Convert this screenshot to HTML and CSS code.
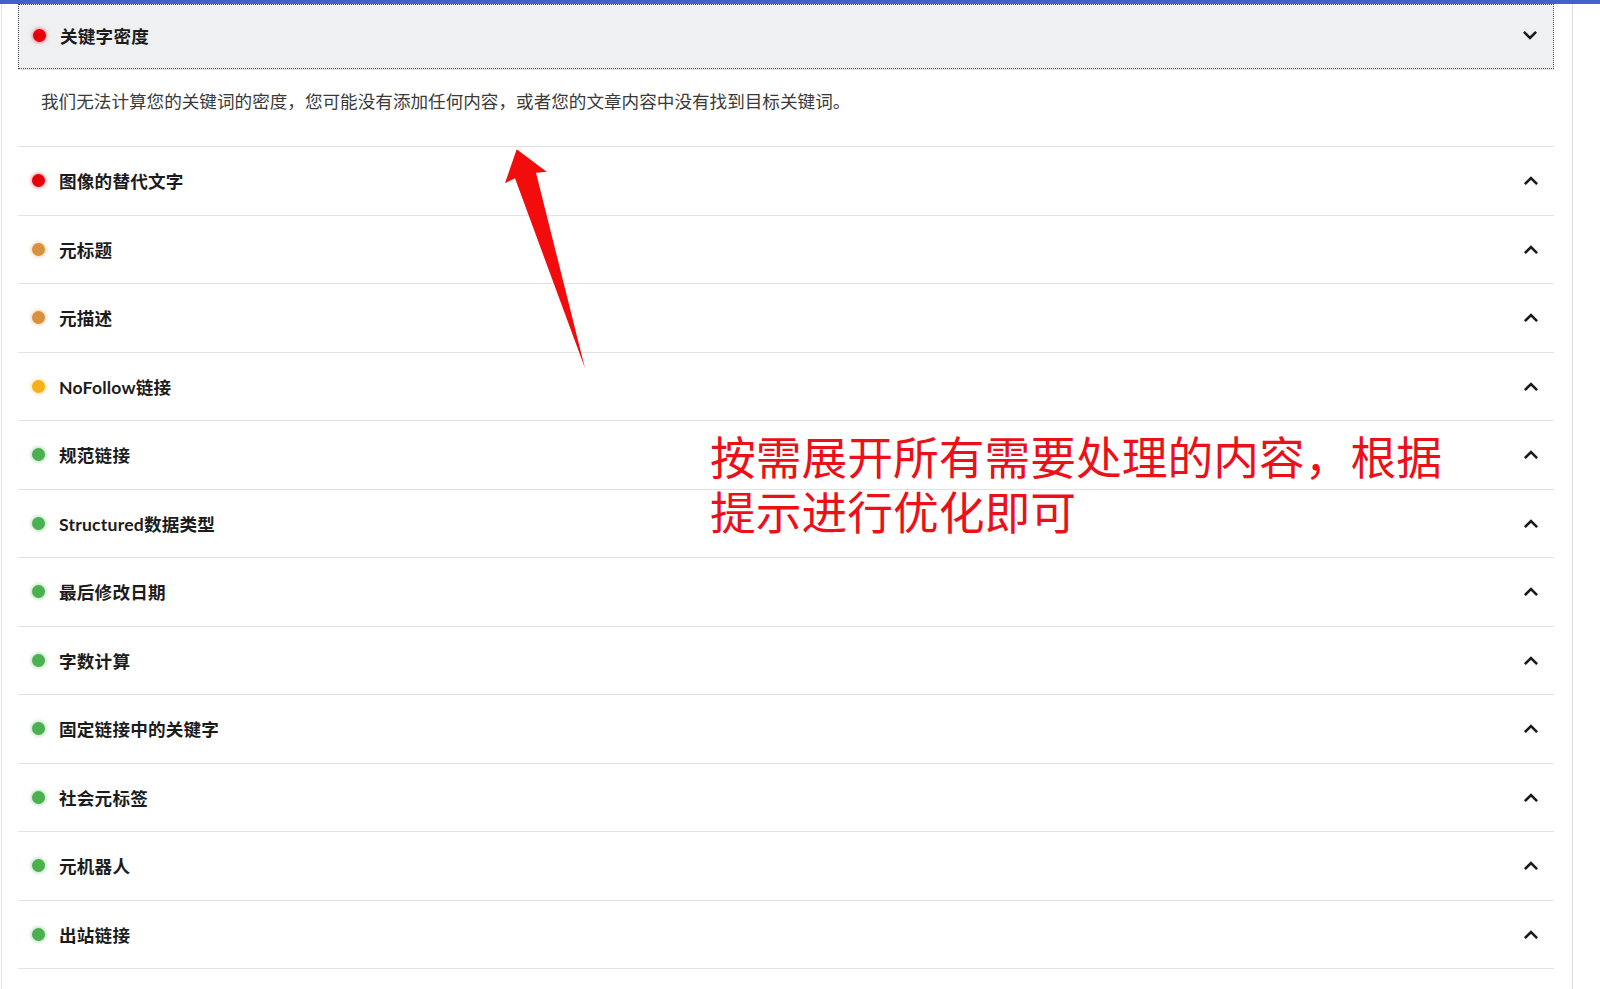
FILE: index.html
```html
<!DOCTYPE html>
<html lang="zh-CN">
	<head>
		<meta charset="UTF-8" />
		<title>SEO 分析</title>
		<link rel="stylesheet" href="styles.css">
	</head>
	<body>
		<div class="top-bar"></div>

		<div class="panel">
			<div class="check-item is-open">
				<button class="check-head">
					<span class="dot dot-red"></span>
					<span class="check-title">关键字密度</span>
					<svg class="chevron" viewBox="0 0 14 9"><polyline points="1.8,1.8 7,7 12.2,1.8" /></svg>
				</button>
				<div class="check-body">
					我们无法计算您的关键词的密度，您可能没有添加任何内容，或者您的文章内容中没有找到目标关键词。
				</div>
			</div>

			<div class="check-item">
				<div class="check-head">
					<span class="dot dot-red"></span>
					<span class="check-title">图像的替代文字</span>
					<svg class="chevron" viewBox="0 0 14 9"><polyline points="1.8,7.2 7,2 12.2,7.2" /></svg>
				</div>
			</div>
			<div class="check-item">
				<div class="check-head">
					<span class="dot dot-orange"></span>
					<span class="check-title">元标题</span>
					<svg class="chevron" viewBox="0 0 14 9"><polyline points="1.8,7.2 7,2 12.2,7.2" /></svg>
				</div>
			</div>
			<div class="check-item">
				<div class="check-head">
					<span class="dot dot-orange"></span>
					<span class="check-title">元描述</span>
					<svg class="chevron" viewBox="0 0 14 9"><polyline points="1.8,7.2 7,2 12.2,7.2" /></svg>
				</div>
			</div>
			<div class="check-item">
				<div class="check-head">
					<span class="dot dot-amber"></span>
					<span class="check-title">NoFollow链接</span>
					<svg class="chevron" viewBox="0 0 14 9"><polyline points="1.8,7.2 7,2 12.2,7.2" /></svg>
				</div>
			</div>
			<div class="check-item">
				<div class="check-head">
					<span class="dot dot-green"></span>
					<span class="check-title">规范链接</span>
					<svg class="chevron" viewBox="0 0 14 9"><polyline points="1.8,7.2 7,2 12.2,7.2" /></svg>
				</div>
			</div>
			<div class="check-item">
				<div class="check-head">
					<span class="dot dot-green"></span>
					<span class="check-title">Structured数据类型</span>
					<svg class="chevron" viewBox="0 0 14 9"><polyline points="1.8,7.2 7,2 12.2,7.2" /></svg>
				</div>
			</div>
			<div class="check-item">
				<div class="check-head">
					<span class="dot dot-green"></span>
					<span class="check-title">最后修改日期</span>
					<svg class="chevron" viewBox="0 0 14 9"><polyline points="1.8,7.2 7,2 12.2,7.2" /></svg>
				</div>
			</div>
			<div class="check-item">
				<div class="check-head">
					<span class="dot dot-green"></span>
					<span class="check-title">字数计算</span>
					<svg class="chevron" viewBox="0 0 14 9"><polyline points="1.8,7.2 7,2 12.2,7.2" /></svg>
				</div>
			</div>
			<div class="check-item">
				<div class="check-head">
					<span class="dot dot-green"></span>
					<span class="check-title">固定链接中的关键字</span>
					<svg class="chevron" viewBox="0 0 14 9"><polyline points="1.8,7.2 7,2 12.2,7.2" /></svg>
				</div>
			</div>
			<div class="check-item">
				<div class="check-head">
					<span class="dot dot-green"></span>
					<span class="check-title">社会元标签</span>
					<svg class="chevron" viewBox="0 0 14 9"><polyline points="1.8,7.2 7,2 12.2,7.2" /></svg>
				</div>
			</div>
			<div class="check-item">
				<div class="check-head">
					<span class="dot dot-green"></span>
					<span class="check-title">元机器人</span>
					<svg class="chevron" viewBox="0 0 14 9"><polyline points="1.8,7.2 7,2 12.2,7.2" /></svg>
				</div>
			</div>
			<div class="check-item">
				<div class="check-head">
					<span class="dot dot-green"></span>
					<span class="check-title">出站链接</span>
					<svg class="chevron" viewBox="0 0 14 9"><polyline points="1.8,7.2 7,2 12.2,7.2" /></svg>
				</div>
			</div>
		</div>

		<!-- annotation layer -->
		<svg class="note-arrow" viewBox="0 0 120 250">
			<polygon points="36.7,19.3 66.7,41.7 56,42.7 105,238.3 35,48.3 25,53.3" />
		</svg>
		<div class="note-text">
			<div class="note-line">按需展开所有需要处理的内容，根据</div>
			<div class="note-line">提示进行优化即可</div>
		</div>
	</body>
</html>
```

FILE: styles.css
```css
:root {
	--text-color: #1c1c1c;
	--text-body: #3a3a3a;
	--line-color: #e2e2e2;
	--head-bg: #eff0f2;
	--accent-blue: #4263c6;
	--note-red: #ec1018;
}

* {
	box-sizing: border-box;
	margin: 0;
	padding: 0;
}

body {
	font-family: Lato, 'Noto Sans CJK SC', sans-serif;
	background-color: #fff;
	color: var(--text-color);
	width: 1600px;
	height: 989px;
	overflow: hidden;
	position: relative;
}

.top-bar {
	height: 4px;
	background-color: var(--accent-blue);
}

.panel {
	margin-left: 1px;
	width: 1572px;
	height: 985px;
	padding: 0 18px 0 16px;
	border-left: 1px solid #e6e6e6;
	border-right: 1px solid #dedede;
}

.check-item {
	border-bottom: 1px solid var(--line-color);
}

.check-head {
	display: flex;
	align-items: center;
	width: 100%;
	height: 67.5px;
	padding: 0 16px 0 14px;
	font: inherit;
	color: inherit;
	background: none;
	border: 0;
	text-align: left;
}

.is-open .check-head {
	height: 65px;
	padding-bottom: 3px;
	background-color: var(--head-bg);
	border: 1px dotted #4a4a4a;
}

.is-open .check-head + .check-body {
	border-top: 1px solid var(--line-color);
}

.check-body {
	height: 77px;
	padding: 0 0 15px 23px;
	display: flex;
	align-items: center;
	font-size: 17.6px;
	color: var(--text-body);
}

.dot {
	width: 13px;
	height: 13px;
	border-radius: 50%;
	flex-shrink: 0;
	margin-right: 14px;
}

.dot-red {
	background-color: #e6000a;
	box-shadow: 0 0 4px rgba(230, 0, 10, 0.7);
}

.dot-orange {
	background-color: #d9913f;
	box-shadow: 0 0 4px rgba(217, 145, 63, 0.7);
}

.dot-amber {
	background-color: #f7b01a;
	box-shadow: 0 0 4px rgba(247, 176, 26, 0.7);
}

.dot-green {
	background-color: #4caf50;
	box-shadow: 0 0 4px rgba(76, 175, 80, 0.7);
}

.check-title {
	flex: 1;
	font-size: 17.6px;
	font-weight: 700;
	letter-spacing: 0.2px;
}

.chevron {
	width: 14px;
	height: 9px;
	fill: none;
	stroke: #1a1a1a;
	stroke-width: 2.6;
	stroke-linecap: square;
}

/* annotation over the list */
.note-arrow {
	position: absolute;
	left: 480px;
	top: 130px;
	width: 120px;
	height: 250px;
	fill: #f20c0c;
}

.note-text {
	position: absolute;
	left: 710px;
	top: 428px;
	font-family: 'Noto Sans CJK SC', sans-serif;
	font-size: 45.75px;
	line-height: 55px;
	color: var(--note-red);
}

.note-line {
	height: 55px;
}
```
